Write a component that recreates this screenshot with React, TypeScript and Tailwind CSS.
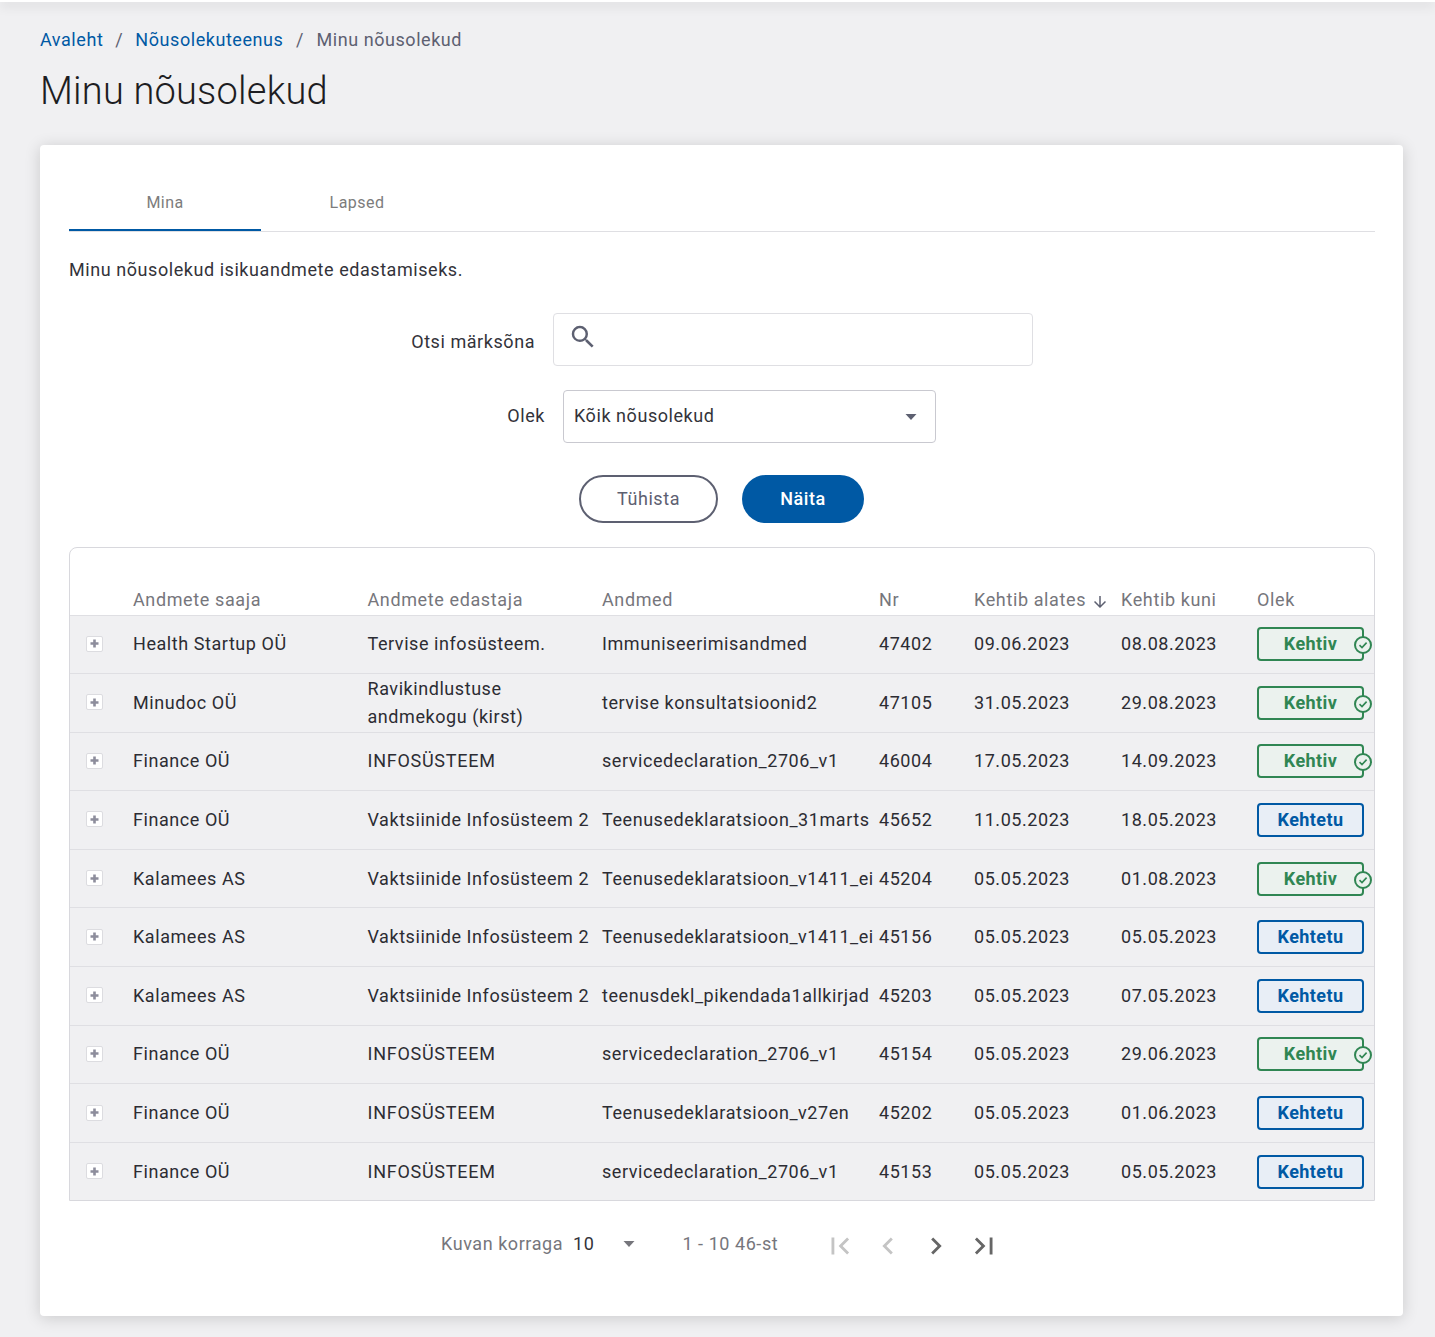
import React from "react";

const rows = [
  ["Health Startup OÜ", "Tervise infosüsteem.", "Immuniseerimisandmed", "47402", "09.06.2023", "08.08.2023", 1],
  ["Minudoc OÜ", "Ravikindlustuse andmekogu (kirst)", "tervise konsultatsioonid2", "47105", "31.05.2023", "29.08.2023", 1],
  ["Finance OÜ", "INFOSÜSTEEM", "servicedeclaration_2706_v1", "46004", "17.05.2023", "14.09.2023", 1],
  ["Finance OÜ", "Vaktsiinide Infosüsteem 2", "Teenusedeklaratsioon_31marts", "45652", "11.05.2023", "18.05.2023", 0],
  ["Kalamees AS", "Vaktsiinide Infosüsteem 2", "Teenusedeklaratsioon_v1411_ei", "45204", "05.05.2023", "01.08.2023", 1],
  ["Kalamees AS", "Vaktsiinide Infosüsteem 2", "Teenusedeklaratsioon_v1411_ei", "45156", "05.05.2023", "05.05.2023", 0],
  ["Kalamees AS", "Vaktsiinide Infosüsteem 2", "teenusdekl_pikendada1allkirjad", "45203", "05.05.2023", "07.05.2023", 0],
  ["Finance OÜ", "INFOSÜSTEEM", "servicedeclaration_2706_v1", "45154", "05.05.2023", "29.06.2023", 1],
  ["Finance OÜ", "INFOSÜSTEEM", "Teenusedeklaratsioon_v27en", "45202", "05.05.2023", "01.06.2023", 0],
  ["Finance OÜ", "INFOSÜSTEEM", "servicedeclaration_2706_v1", "45153", "05.05.2023", "05.05.2023", 0],
] as const;

const grid = "grid grid-cols-[63px_234.5px_234.5px_277px_95px_147px_136px_1fr] items-center";

function Status({ ok }: { ok: boolean }) {
  if (!ok)
    return (
      <span className="flex h-[34px] w-[107px] items-center justify-center rounded-[4px] border-2 border-[#0059a4] bg-[#e8eef6] text-[18px] font-bold tracking-[0.4px] text-[#0059a4]">
        Kehtetu
      </span>
    );
  return (
    <span className="relative flex h-[34px] w-[107px] items-center justify-center rounded-[4px] border-2 border-[#308653] bg-[#ebf2ee] text-[18px] font-bold tracking-[0.4px] text-[#308653]">
      Kehtiv
      <span className="absolute right-[-10px] top-[7px] flex h-[18px] w-[18px] items-center justify-center rounded-full border-2 border-[#308653] bg-[#ebf2ee]">
        <svg width="12" height="12" viewBox="0 0 12 12" fill="none">
          <path d="M2.5 6.2 5 8.6 9.6 3.6" stroke="#308653" strokeWidth="1.6" />
        </svg>
      </span>
    </span>
  );
}

function Expander() {
  return (
    <span className="mb-[1px] ml-[16px] flex h-[16px] w-[17px] items-center justify-center rounded-[2px] border border-[#dcdce0] bg-white">
      <svg width="9" height="9" viewBox="0 0 9 9">
        <path d="M3.2 0.5h2.6v2.7h2.7v2.6H5.8v2.7H3.2V5.8H.5V3.2h2.7z" fill="#8d8d9c" />
      </svg>
    </span>
  );
}

function Caret({ color }: { color: string }) {
  return (
    <svg width="12" height="6" viewBox="0 0 12 6">
      <path d="M0.5 0h11L6 6z" fill={color} />
    </svg>
  );
}

function Pager({ d, c }: { d: string; c: string }) {
  return (
    <span className="flex h-[48px] w-[48px] items-center justify-center">
      <svg width="34" height="34" viewBox="0 0 24 24" fill={c}>
        <path d={d} />
      </svg>
    </span>
  );
}

export default function App() {
  return (
    <div className="flex h-[1337px] flex-col overflow-hidden bg-[#f0f0f2] font-['Roboto',sans-serif] text-[18px] tracking-[0.56px] text-[#2c2c33]">
      <div className="h-[2px] bg-white shadow-[0_2px_12px_rgba(0,0,0,0.3)]" />
      <div className="px-[40px]">
        <nav className="mt-[26px] flex h-[24px] items-center leading-[24px]">
          <span className="text-[#0059a4]">Avaleht</span>
          <span className="mx-[12px] text-[#5d6071]">/</span>
          <span className="text-[#0059a4]">Nõusolekuteenus</span>
          <span className="mx-[12.5px] text-[#5d6071]">/</span>
          <span className="text-[#5d6071]">Minu nõusolekud</span>
        </nav>
        <h1 className="mt-[14px] text-[38px] font-light leading-[50px] tracking-[0.2px] text-[#1d1d22]">
          Minu nõusolekud
        </h1>
        <main className="mt-[29px] h-[1171px] w-[1363px] rounded-[4px] bg-white pl-[29px] pr-[28px] shadow-[0_2px_16px_rgba(0,0,0,0.16)]">
          <div className="flex h-[87px] items-end border-b border-[#dfdfe3]">
            <div className="flex h-[58px] w-[192px] items-center justify-center border-b-2 border-[#0059a4] pt-[4px] text-[16px] tracking-[0.45px] text-[#7c7c7c]">
              Mina
            </div>
            <div className="flex h-[58px] w-[192px] items-center justify-center pt-[2px] text-[16px] tracking-[0.45px] text-[#7c7c7c]">
              Lapsed
            </div>
          </div>
          <p className="mt-[25px] leading-[26px] text-[#33333a]">Minu nõusolekud isikuandmete edastamiseks.</p>

          <div className="mt-[30px] flex h-[53px] items-center pl-[324px]">
            <label className="w-[142px] pt-[4px] text-right text-[#33333a]">Otsi märksõna</label>
            <div className="ml-[18px] flex h-[53px] w-[480px] items-center rounded-[4px] border border-[#dfdfe3] pl-[14px]">
              <svg width="30" height="30" viewBox="0 0 24 24" fill="#5d6071" className="mb-[6px]">
                <path d="M15.5 14h-.79l-.28-.27A6.47 6.47 0 0 0 16 9.5 6.5 6.5 0 1 0 9.5 16c1.61 0 3.09-.59 4.23-1.57l.27.28v.79l5 4.99L20.49 19l-4.99-5zm-6 0C7.01 14 5 11.99 5 9.5S7.01 5 9.5 5 14 7.01 14 9.5 11.99 14 9.5 14z" />
              </svg>
            </div>
          </div>

          <div className="mt-[24px] flex h-[53px] items-center pl-[342px]">
            <label className="w-[134px] pb-[2px] text-right text-[#33333a]">Olek</label>
            <div className="ml-[18px] flex h-[53px] w-[373px] items-center justify-between rounded-[4px] border border-[#c9c9d0] pl-[10px] pr-[18px] text-[#33333a]">
              <span className="pb-[2px]">Kõik nõusolekud</span>
              <Caret color="#5d6071" />
            </div>
          </div>

          <div className="mt-[32px] flex h-[48px] pl-[510px]">
            <button className="h-[48px] w-[139px] rounded-full border-2 border-[#5d6071] pb-[2px] text-[18px] text-[#5d6071]">Tühista</button>
            <button className="ml-[24px] h-[48px] w-[122px] rounded-full bg-[#0059a4] pb-[2px] text-[18px] font-medium text-white">Näita</button>
          </div>

          <div className="mt-[24px] rounded-t-[8px] border border-[#d8d8dd]">
            <div className={`${grid} h-[67.25px] items-end pb-[3px] leading-[24px] tracking-[0.62px] text-[#76767c]`}>
              <span />
              <span>Andmete saaja</span>
              <span>Andmete edastaja</span>
              <span>Andmed</span>
              <span>Nr</span>
              <span className="flex items-center">
                Kehtib alates
                <svg width="18" height="18" viewBox="0 0 24 24" fill="#5d6071" className="ml-[5px] mt-[3px]">
                  <path d="M20 12l-1.41-1.41L13 16.17V4h-2v12.17l-5.58-5.59L4 12l8 8 8-8z" />
                </svg>
              </span>
              <span>Kehtib kuni</span>
              <span>Olek</span>
            </div>
            {rows.map((r, i) => (
              <div
                key={i}
                className={`${grid} bg-[#f0f0f2] leading-[28px] ${
                  i === 0
                    ? "h-[58.65px] border-y border-[#dfdfe3] pb-[1.15px]"
                    : i < 9
                      ? "h-[58.65px] border-b border-[#dfdfe3] pb-[0.15px]"
                      : "h-[56.9px] pt-[1px]"
                }`}
              >
                <Expander />
                <span>{r[0]}</span>
                <span className={r[1] === "INFOSÜSTEEM" ? "pr-[10px] tracking-[0.74px]" : "pr-[10px]"}>{r[1]}</span>
                <span className="whitespace-nowrap">{r[2]}</span>
                <span>{r[3]}</span>
                <span>{r[4]}</span>
                <span>{r[5]}</span>
                <Status ok={r[6] === 1} />
              </div>
            ))}
          </div>

          <div className="mt-[21px] flex h-[48px] items-center pl-[372px] text-[#76767c]">
            <span className="flex items-center pb-[4px]">
              <span>Kuvan korraga</span>
              <span className="ml-[10px] text-[#33333a]">10</span>
              <span className="ml-[29px]"><Caret color="#76767c" /></span>
              <span className="ml-[47px]">1 - 10 46-st</span>
            </span>
            <span className="ml-[38px] flex">
              <Pager c="#c4c4c4" d="M18.41 16.59 13.82 12l4.59-4.59L17 6l-6 6 6 6zM6 6h2v12H6z" />
              <Pager c="#c4c4c4" d="M15.41 16.59 10.83 12l4.58-4.59L14 6l-6 6 6 6z" />
              <Pager c="#666" d="M8.59 16.59 13.17 12 8.59 7.41 10 6l6 6-6 6z" />
              <Pager c="#666" d="M5.59 7.41 10.18 12l-4.59 4.59L7 18l6-6-6-6zM16 6h2v12h-2z" />
            </span>
          </div>
        </main>
      </div>
    </div>
  );
}
